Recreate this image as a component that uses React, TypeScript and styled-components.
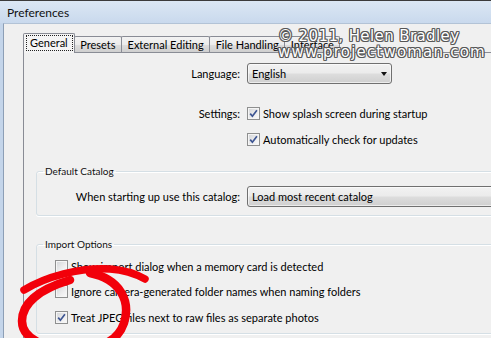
import React from "react";
import styled, { createGlobalStyle } from "styled-components";

const Global = createGlobalStyle`
  html, body { margin: 0; padding: 0; }
  body {
    width: 491px;
    height: 338px;
    overflow: hidden;
    font-family: Lato, "Liberation Sans", sans-serif;
    font-size: 11px;
    color: #000;
  }
`;

const Window = styled.div`
  position: relative;
  width: 491px;
  height: 338px;
  overflow: hidden;
  box-sizing: border-box;
  border-top: 1px solid #3b3b3b;
  background: #c4d5ea;
  display: flex;
  flex-direction: column;
`;

const TitleBar = styled.div`
  height: 22px;
  flex-shrink: 0;
  box-sizing: border-box;
  padding: 1px 0 0 7px;
  display: flex;
  align-items: center;
  background: linear-gradient(#dbe7f4, #c9d9ed);
  font-size: 12px;
  color: #111;
`;

const Client = styled.div`
  flex: 1;
  margin-left: 3px;
  border-left: 1px solid #8d9fb6;
  border-top: 1px solid #b3c3d6;
  background: #f0f0f0;
  padding: 9px 0 0 19px;
  display: flex;
  flex-direction: column;
  min-width: 0;
`;

const TabRow = styled.div`
  display: flex;
  align-items: flex-start;
  height: 20px;
  margin-bottom: -1px;
  position: relative;
  z-index: 1;
`;

const Tab = styled.div<{ $active?: boolean }>`
  box-sizing: border-box;
  display: flex;
  align-items: center;
  border: 1px solid #898c95;
  border-bottom: none;
  border-radius: 2px 2px 0 0;
  white-space: nowrap;
  ${(p) =>
    p.$active
      ? `
    height: 20px;
    padding: 0 1px 1px 2px;
    background: #f4f4f4;
  `
      : `
    height: 16px;
    margin-top: 3px;
    padding: 0 5.5px;
    margin-left: -1px;
    background: linear-gradient(#f3f3f3 0%, #ebebeb 50%, #dddddd 51%, #cfcfcf 100%);
  `}
`;

const Focus = styled.span`
  border: 1px dotted #222;
  padding: 0 4px 1px 3px;
  line-height: 13px;
`;

const Panel = styled.div`
  flex: 1;
  width: 560px;
  border-top: 1px solid #898c95;
  border-left: 1px solid #898c95;
  background: #f0f0f0;
  padding: 10px 0 0 12px;
  box-sizing: border-box;
`;

const FieldRow = styled.div<{ $top?: number; $h?: number }>`
  display: flex;
  align-items: center;
  gap: 7px;
  height: ${(p) => p.$h ?? 20}px;
  margin-top: ${(p) => p.$top ?? 0}px;
`;

const Label = styled.div<{ $w?: number }>`
  width: ${(p) => p.$w ?? 204}px;
  flex-shrink: 0;
  text-align: right;
  white-space: nowrap;
`;

const Select = styled.div<{ $w: number }>`
  box-sizing: border-box;
  width: ${(p) => p.$w}px;
  height: 21px;
  flex-shrink: 0;
  border: 1px solid #707070;
  border-radius: 3px;
  background: linear-gradient(#f2f2f2 0%, #ebebeb 48%, #dddddd 52%, #cfcfcf 100%);
  box-shadow: inset 0 0 0 1px rgba(255, 255, 255, 0.6);
  display: flex;
  align-items: center;
  justify-content: space-between;
  padding: 0 4px 0 4px;
  white-space: nowrap;
`;

const Arrow = styled.span`
  width: 0;
  height: 0;
  border-left: 3.5px solid transparent;
  border-right: 3.5px solid transparent;
  border-top: 4px solid #111;
`;

const CheckLine = styled.label`
  display: flex;
  align-items: center;
  gap: 3px;
  white-space: nowrap;
`;

const Box = styled.span`
  box-sizing: border-box;
  width: 13px;
  height: 13px;
  flex-shrink: 0;
  border: 1px solid #8e8f8f;
  background: linear-gradient(135deg, #d2d4d7 0%, #eeeeef 60%, #fbfbfb 100%);
  box-shadow: inset 0 0 0 1px #f5f5f5;
  display: flex;
  align-items: center;
  justify-content: center;
`;

const Group = styled.fieldset<{ $top: number }>`
  margin: ${(p) => p.$top}px 0 0 0;
  padding: 0;
  border: 1px solid #d5dfe5;
  border-radius: 3px;
  box-shadow: 0 1px 0 #fff, inset 0 1px 0 #fff;
  min-width: 0;
`;

const Legend = styled.legend`
  margin-left: 6px;
  padding: 0 2px;
  font-size: 10px;
  line-height: 13px;
  color: #111;
`;

const GroupBody = styled.div<{ $pad: string }>`
  padding: ${(p) => p.$pad};
  display: flex;
  flex-direction: column;
`;

const OptionList = styled.div`
  display: flex;
  flex-direction: column;
  gap: 5.5px;
`;

const OptionRow = styled.div`
  height: 20px;
  display: flex;
  align-items: center;
`;

const Watermark = styled.div`
  position: absolute;
  z-index: 5;
  left: 278px;
  top: 27px;
  font-family: "DejaVu Sans", Verdana, sans-serif;
  font-size: 15px;
  line-height: 16px;
  color: #fff;
  text-shadow: 1px 0 0 #555, -1px 0 0 #555, 0 1px 0 #555, 0 -1px 0 #555,
    1px 1px 0 #666, -1px -1px 0 #666, 1px -1px 0 #666, -1px 1px 0 #666;
  pointer-events: none;
  white-space: nowrap;
`;

const WLine = styled.div<{ $ls: number }>`
  letter-spacing: ${(p) => p.$ls}px;
`;

const Scribble = styled.svg`
  position: absolute;
  z-index: 6;
  left: 0;
  top: 0;
  pointer-events: none;
`;

const Check = ({ on }: { on: boolean }) => (
  <Box>
    {on && (
      <svg width="9" height="9" viewBox="0 0 9 9">
        <path d="M1.2 4.6 L3.4 7.2 L7.9 1.3" fill="none" stroke="#3d5592" strokeWidth="1.7" />
      </svg>
    )}
  </Box>
);

export default function App() {
  return (
    <>
      <Global />
      <Window>
        <TitleBar>Preferences</TitleBar>
        <Client>
          <TabRow>
            <Tab $active>
              <Focus>General</Focus>
            </Tab>
            <Tab>Presets</Tab>
            <Tab>External Editing</Tab>
            <Tab>File Handling</Tab>
            <Tab>Interface</Tab>
          </TabRow>
          <Panel>
            <FieldRow $h={21}>
              <Label>Language:</Label>
              <Select $w={145}>
                <span>English</span>
                <Arrow />
              </Select>
            </FieldRow>
            <FieldRow $top={19}>
              <Label>Settings:</Label>
              <CheckLine>
                <Check on />
                Show splash screen during startup
              </CheckLine>
            </FieldRow>
            <FieldRow $top={6}>
              <Label />
              <CheckLine>
                <Check on />
                Automatically check for updates
              </CheckLine>
            </FieldRow>

            <Group $top={16}>
              <Legend>Default Catalog</Legend>
              <GroupBody $pad="8px 0 8px 0">
                <FieldRow $h={21}>
                  <Label $w={203}>When starting up use this catalog:</Label>
                  <Select $w={300}>
                    <span>Load most recent catalog</span>
                    <Arrow />
                  </Select>
                </FieldRow>
              </GroupBody>
            </Group>

            <Group $top={22}>
              <Legend>Import Options</Legend>
              <GroupBody $pad="5px 0 6px 18px">
                <OptionList>
                  <OptionRow>
                    <CheckLine>
                      <Check on={false} />
                      Show import dialog when a memory card is detected
                    </CheckLine>
                  </OptionRow>
                  <OptionRow>
                    <CheckLine>
                      <Check on={false} />
                      Ignore camera-generated folder names when naming folders
                    </CheckLine>
                  </OptionRow>
                  <OptionRow>
                    <CheckLine>
                      <Check on />
                      Treat JPEG files next to raw files as separate photos
                    </CheckLine>
                  </OptionRow>
                </OptionList>
              </GroupBody>
            </Group>
          </Panel>
        </Client>

        <Watermark>
          <WLine $ls={0.4}>© 2011, Helen Bradley</WLine>
          <WLine $ls={1.2}>www.projectwoman.com</WLine>
        </Watermark>

        <Scribble width="491" height="338" viewBox="0 0 491 338">
          <path
            d="M24 289 C45 276, 80 266, 110 268 C125 269, 136 273, 145 278"
            fill="none"
            stroke="#f2000a"
            strokeWidth="7.5"
            strokeLinecap="round"
          />
          <path
            d="M90 272 C120 278, 131 300, 124 322 C118 340, 100 348, 75 348 C45 348, 22 338, 22 320 C22 302, 40 288, 70 279"
            fill="none"
            stroke="#f2000a"
            strokeWidth="8.5"
            strokeLinecap="round"
          />
        </Scribble>
      </Window>
    </>
  );
}
